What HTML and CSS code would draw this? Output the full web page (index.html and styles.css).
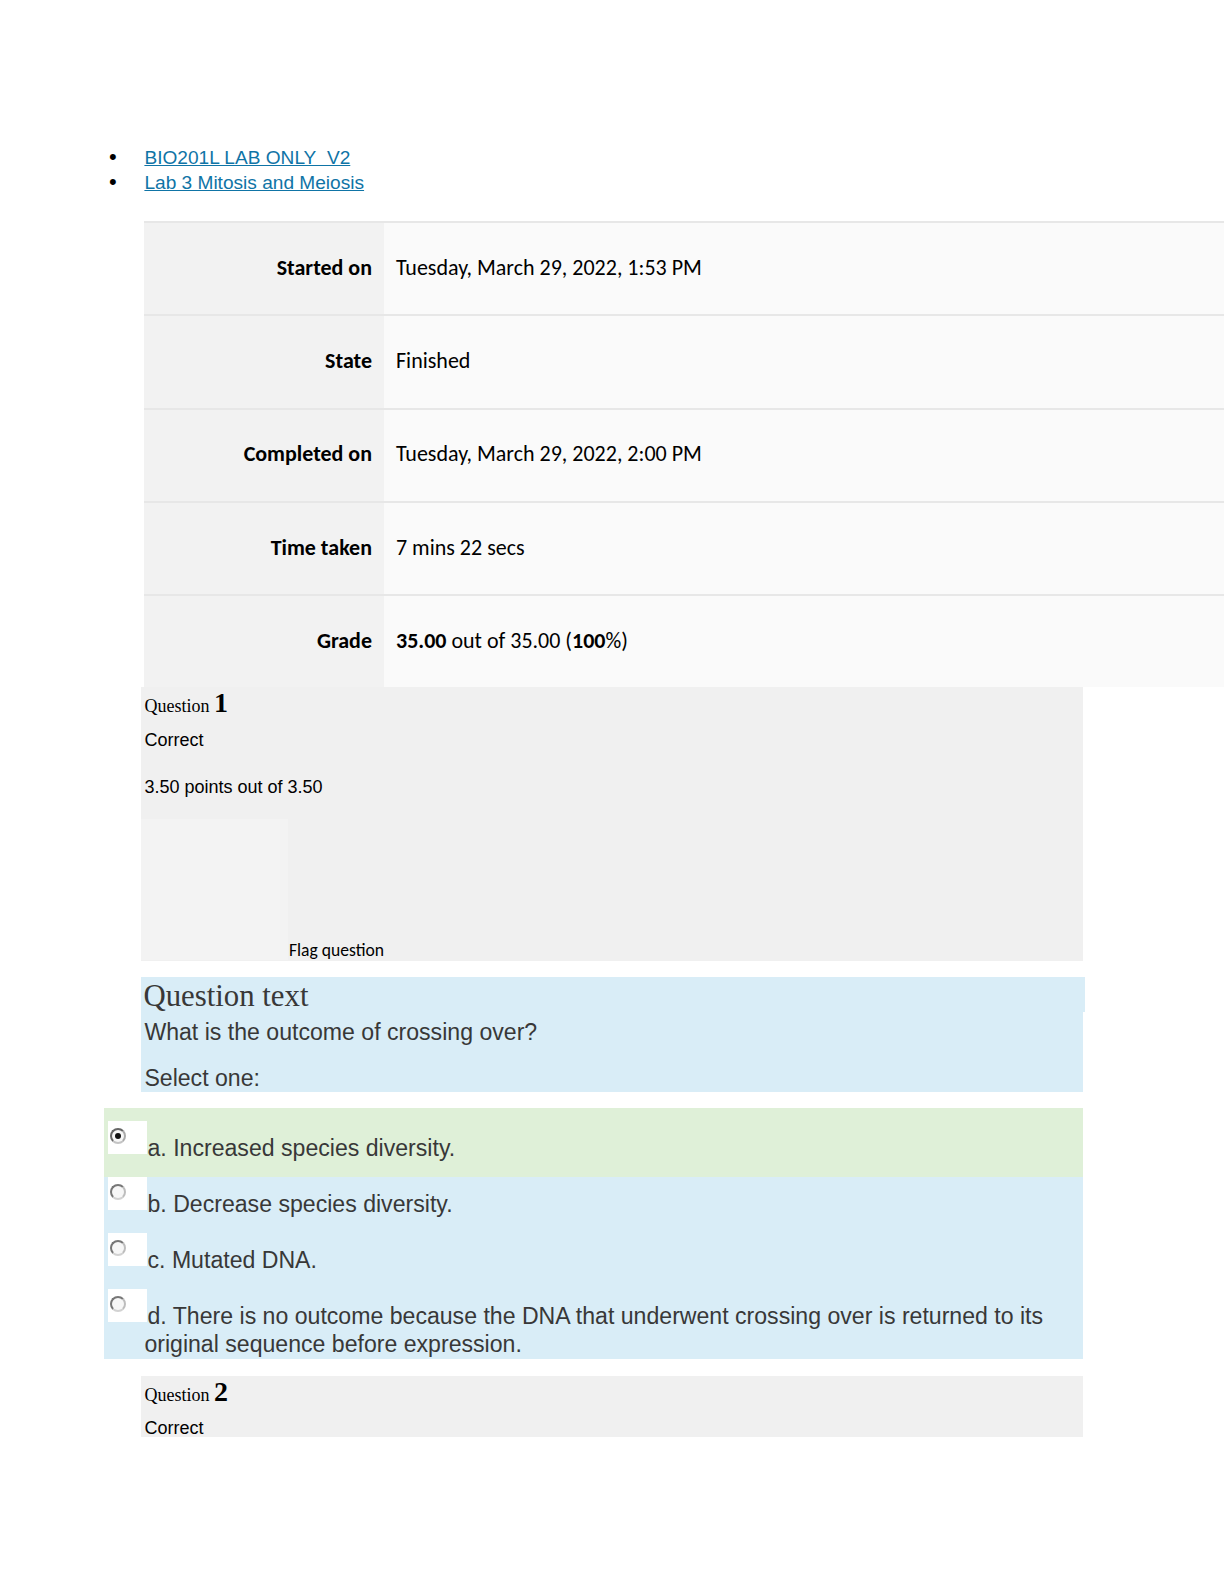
FILE: index.html
```html
<!DOCTYPE html>
<html>
<head>
<meta charset="utf-8">
<link rel="stylesheet" href="styles.css">
</head>
<body>
<ul class="crumbs">
  <li><a href="#">BIO201L LAB ONLY&nbsp; V2</a></li>
  <li><a href="#">Lab 3 Mitosis and Meiosis</a></li>
</ul>

<div class="summary">
  <div class="row"><div class="th">Started on</div><div class="td">Tuesday, March 29, 2022, 1:53 PM</div></div>
  <div class="row"><div class="th">State</div><div class="td">Finished</div></div>
  <div class="row"><div class="th">Completed on</div><div class="td">Tuesday, March 29, 2022, 2:00 PM</div></div>
  <div class="row"><div class="th">Time taken</div><div class="td">7 mins 22 secs</div></div>
  <div class="row"><div class="th">Grade</div><div class="td"><b>35.00</b> out of 35.00 (<b>100</b>%)</div></div>
</div>

<div class="qinfo">
  <h3 class="qno">Question <span class="num">1</span></h3>
  <div class="state">Correct</div>
  <div class="grade">3.50 points out of 3.50</div>
  <div class="flag">
    <div class="flagbox"></div>
    <div class="flagtext">Flag question</div>
  </div>
</div>

<div class="qtext">
  <h4 class="qtitle">Question text</h4>
  <div class="qbody">
    <p class="prompt">What is the outcome of crossing over?</p>
    <p class="prompt select">Select one:</p>
  </div>
</div>

<div class="answers">
  <div class="ans correct"><span class="radio"><span class="dot checked"></span></span>a. Increased species diversity.</div>
  <div class="ans"><span class="radio"><span class="dot"></span></span>b. Decrease species diversity.</div>
  <div class="ans"><span class="radio"><span class="dot"></span></span>c. Mutated DNA.</div>
  <div class="ans last"><span class="radio"><span class="dot"></span></span>d. There is no outcome because the DNA that underwent crossing over is returned to its original sequence before expression.</div>
</div>

<div class="qinfo q2">
  <h3 class="qno">Question <span class="num">2</span></h3>
  <div class="state">Correct</div>
</div>
</body>
</html>
```

FILE: styles.css
```css
html, body {
  margin: 0;
  padding: 0;
  background: #ffffff;
}
body {
  width: 1224px;
  min-height: 1584px;
  font-family: "Liberation Sans", Arial, sans-serif;
  color: #000;
}

.crumbs {
  list-style: none;
  margin: 145px 0 0 0;
  padding: 0 0 0 109px;
  font-size: 19.1px;
  line-height: 25px;
}
.crumbs li::before {
  content: "\2022";
  display: inline-block;
  width: 35.4px;
  color: #000;
  font-size: 22px;
  line-height: 20px;
}
.crumbs a {
  color: #0f74a6;
  text-decoration: underline;
}

.summary {
  margin: 26px 0 0 144.4px;
  font-family: Carlito, Lato, "Open Sans", sans-serif;
  font-size: 22px;
  letter-spacing: 0;
}
.row {
  display: flex;
  height: 91.3px;
  border-top: 2px solid #e7e7e7;
}
.th {
  width: 227.6px;
  padding-right: 12px;
  padding-bottom: 3px;
  background: #f2f2f2;
  font-weight: bold;
  display: flex;
  align-items: center;
  justify-content: flex-end;
}
.td {
  flex: 1;
  padding-left: 12px;
  padding-bottom: 3px;
  background: #fafafa;
  display: flex;
  align-items: center;
  white-space: pre;
}

.qinfo {
  width: 938.6px;
  margin-left: 141.4px;
  padding-left: 3px;
  height: 273.6px;
  background: #f0f0f0;
}
.qno {
  margin: 0;
  padding-top: 2px;
  font-family: "Liberation Serif", "Times New Roman", serif;
  font-weight: normal;
  font-size: 18px;
  line-height: 28px;
}
.qno .num {
  font-weight: bold;
  font-size: 28px;
}
.state {
  font-size: 18px;
  line-height: 22px;
  margin-top: 8.5px;
}
.grade {
  font-size: 18px;
  line-height: 22px;
  margin-top: 25px;
}
.flag {
  display: flex;
  margin-left: -3px;
  margin-top: 21.5px;
  height: 140.6px;
}
.flagbox {
  width: 146.6px;
  background: #f3f3f3;
}
.flagtext {
  align-self: flex-end;
  font-family: Carlito, Lato, "Open Sans", sans-serif;
  font-size: 17.6px;
  line-height: 20px;
  padding-left: 1px;
}

.qtext {
  width: 943.6px;
  margin: 16.2px 0 0 141.4px;
  color: #383838;
}
.qtitle {
  margin: 0;
  height: 34.3px;
  background: #d9edf7;
  padding-left: 2px;
  font-family: "Liberation Serif", "Times New Roman", serif;
  font-weight: normal;
  font-size: 30.8px;
  line-height: 38px;
}
.qbody {
  width: 938.6px;
  padding: 2.3px 0 0 3px;
  background: #d9edf7;
  height: 77.7px;
}
.prompt {
  margin: 0;
  font-size: 23.1px;
  line-height: 36px;
}
.prompt.select {
  margin-top: 10px;
}

.answers {
  width: 939px;
  margin: 16px 0 0 104px;
  padding-left: 40.4px;
  background: #d9edf7;
  color: #383838;
  font-size: 23.1px;
  line-height: 28.5px;
}
.ans {
  margin-left: -40.4px;
  padding-left: 40.4px;
  padding-top: 0;
  padding-bottom: 14.5px;
}
.ans.correct {
  background: #dff0d8;
  padding-top: 13px;
  padding-bottom: 14.5px;
}
.ans.last {
  padding-bottom: 0;
}
.radio {
  display: inline-block;
  width: 38.5px;
  height: 33px;
  margin-left: -36.4px;
  margin-right: 1px;
  background: #ffffff;
  position: relative;
  vertical-align: 2px;
}
.dot {
  position: absolute;
  left: 2px;
  top: 7px;
  width: 12px;
  height: 12px;
  border-radius: 50%;
  border: 2px solid #777;
  border-right-color: #bdbdbd;
  border-bottom-color: #d2d2d2;
  background: #f7f7f7;
}
.dot.checked {
  border-color: #666;
  border-right-color: #aaa;
  border-bottom-color: #c4c4c4;
}
.dot.checked::after {
  content: "";
  position: absolute;
  left: 3px;
  top: 3px;
  width: 6px;
  height: 6px;
  border-radius: 50%;
  background: #111;
}

.q2 {
  margin-top: 17px;
  height: 61.7px;
}
```
